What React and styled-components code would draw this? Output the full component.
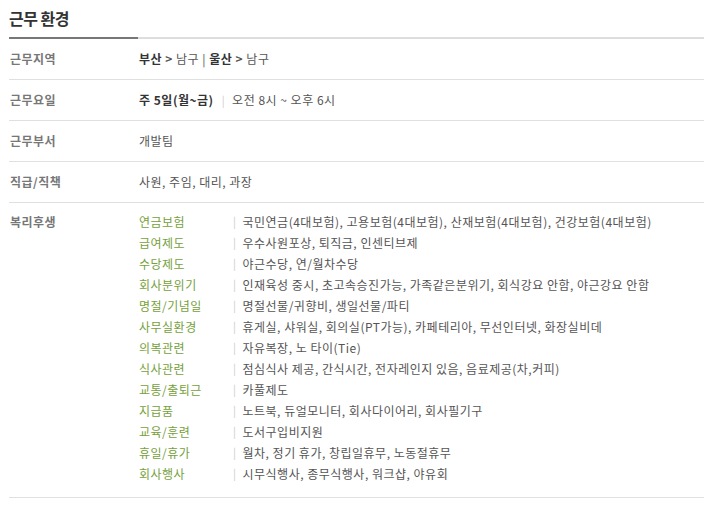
import styled, { createGlobalStyle } from "styled-components";

const GlobalStyle = createGlobalStyle`
  body {
    margin: 0;
    background: #fff;
    font-family: "Noto Sans CJK KR", "Noto Sans", sans-serif;
  }
`;

const benefits = [
  ["연금보험", "국민연금(4대보험), 고용보험(4대보험), 산재보험(4대보험), 건강보험(4대보험)"],
  ["급여제도", "우수사원포상, 퇴직금, 인센티브제"],
  ["수당제도", "야근수당, 연/월차수당"],
  ["회사분위기", "인재육성 중시, 초고속승진가능, 가족같은분위기, 회식강요 안함, 야근강요 안함"],
  ["명절/기념일", "명절선물/귀향비, 생일선물/파티"],
  ["사무실환경", "휴게실, 샤워실, 회의실(PT가능), 카페테리아, 무선인터넷, 화장실비데"],
  ["의복관련", "자유복장, 노 타이(Tie)"],
  ["식사관련", "점심식사 제공, 간식시간, 전자레인지 있음, 음료제공(차,커피)"],
  ["교통/출퇴근", "카풀제도"],
  ["지급품", "노트북, 듀얼모니터, 회사다이어리, 회사필기구"],
  ["교육/훈련", "도서구입비지원"],
  ["휴일/휴가", "월차, 정기 휴가, 창립일휴무, 노동절휴무"],
  ["회사행사", "시무식행사, 종무식행사, 워크샵, 야유회"],
];

export default function App() {
  return (
    <>
      <GlobalStyle />
      <Section>
        <Title>근무 환경</Title>
        <Table>
          <Row>
            <Label>근무지역</Label>
            <Value>
              <Strong>부산</Strong> <Arrow>&gt;</Arrow> 남구 | <Strong>울산</Strong> <Arrow>&gt;</Arrow> 남구
            </Value>
          </Row>
          <Row>
            <Label>근무요일</Label>
            <Value>
              <Strong>주 5일(월~금)</Strong>
              <Bar>|</Bar>
              오전 8시 ~ 오후 6시
            </Value>
          </Row>
          <Row>
            <Label>근무부서</Label>
            <Value>개발팀</Value>
          </Row>
          <Row>
            <Label>직급/직책</Label>
            <Value>사원, 주임, 대리, 과장</Value>
          </Row>
          <Row $welfare>
            <Label>복리후생</Label>
            <BenefitList>
              {benefits.map(([name, text]) => (
                <Benefit key={name}>
                  <BenefitName>{name}</BenefitName>
                  <Bar $left>|</Bar>
                  <BenefitText>{text}</BenefitText>
                </Benefit>
              ))}
            </BenefitList>
          </Row>
        </Table>
      </Section>
    </>
  );
}

const Section = styled.section`
  width: 695px;
  margin-left: 9px;
`;

const Title = styled.h2`
  margin: 0;
  height: 37px;
  line-height: 36px;
  font-size: 16px;
  font-weight: 700;
  color: #333;
  letter-spacing: -0.5px;
`;

const Table = styled.div`
  border-top: 2px solid #ddd;
  position: relative;

  &::before {
    content: "";
    position: absolute;
    left: 0;
    top: -2px;
    width: 129px;
    height: 2px;
    background: #777;
  }
`;

const Row = styled.div`
  display: flex;
  align-items: flex-start;
  border-bottom: 1px solid #e0e0e0;
  padding: ${(p) => (p.$welfare ? "8px 0 13px" : "10px 0")};
  line-height: 20px;
  font-size: 12px;
  letter-spacing: 0.5px;
`;

const Label = styled.div`
  width: 129px;
  height: 20px;
  flex-shrink: 0;
  padding-left: 1px;
  color: #777;
  font-weight: 700;
  ${Row}:last-child & {
    line-height: 21px;
  }
`;

const Value = styled.div`
  color: #555;
`;

const Strong = styled.b`
  color: #333;
  font-weight: 700;
`;

const Arrow = styled.span`
  font-weight: 700;
  color: #555;
`;

const Bar = styled.span`
  color: #ccc;
  margin: ${(p) => (p.$left ? "0 6px 0 0" : "0 7px 0 8px")};
  font-size: 11px;
`;

const BenefitList = styled.div`
  display: flex;
  flex-direction: column;
`;

const Benefit = styled.div`
  display: flex;
  align-items: center;
  height: 21px;
  line-height: 21px;
`;

const BenefitName = styled.span`
  width: 94px;
  color: #76a13c;
`;

const BenefitText = styled.span`
  color: #555;
`;
